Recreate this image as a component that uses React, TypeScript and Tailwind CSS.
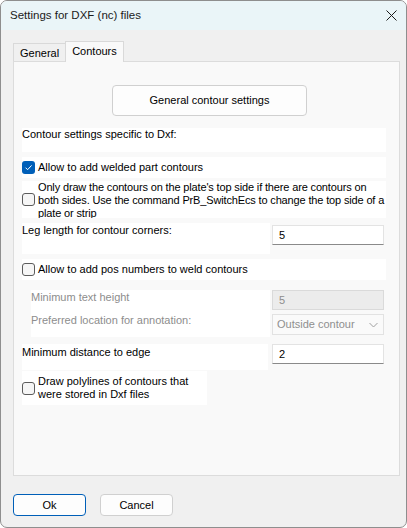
import React from 'react';

const Check = ({ checked }: { checked?: boolean }) =>
  checked ? (
    <span className="w-[13px] h-[13px] rounded-[3px] bg-[#005fb8] flex items-center justify-center shrink-0">
      <svg width="9" height="9" viewBox="0 0 9 9">
        <path d="M1.6 4.7 L3.6 6.7 L7.6 2.4" fill="none" stroke="white" strokeWidth="1" />
      </svg>
    </span>
  ) : (
    <span className="w-[13px] h-[13px] rounded-[3px] border border-[#5c5c5c] bg-[#f6f6f6] shrink-0" />
  );

const TextBox = ({ value, disabled }: { value: string; disabled?: boolean }) => (
  <div
    className={
      disabled
        ? 'w-[112px] h-[20px] border border-[#dadada] bg-[#ececec] text-[#8d8d8d] pl-[6px] flex items-center'
        : 'w-[112px] h-[20px] border border-[#e3e3e3] border-b-[#8a8a8a] bg-white pl-[6px] flex items-center'
    }
  >
    {value}
  </div>
);

export default function App() {
  return (
    <div className="w-[407px] h-[528px] flex flex-col bg-[#f0f0f0] border border-[#8e8e8e] rounded-[7px] overflow-hidden font-['Liberation_Sans',Arial,sans-serif] text-[11px] leading-[13px] text-black">
      {/* title bar */}
      <div className="h-[29px] shrink-0 bg-[#eaf5f8] flex items-center pl-[9px] pr-[9px]">
        <span className="text-[11.5px] text-[#1b1b1b]">Settings for DXF (nc) files</span>
        <svg className="ml-auto" width="11" height="11" viewBox="0 0 11 11">
          <path d="M0.5 0.5 L10.5 10.5 M10.5 0.5 L0.5 10.5" stroke="#1b1b1b" strokeWidth="1" />
        </svg>
      </div>

      <div className="flex-1 flex flex-col pl-[12px] pr-[6px] pt-[12px]">
        {/* tabs */}
        <div className="flex items-end h-[20px]">
          <div className="h-[19px] px-[6px] border border-[#d9d9d9] border-r-0 bg-[#f0f0f0] flex items-center pt-[2px]">
            General
          </div>
          <div className="relative z-10 h-[21px] px-[6px] border border-b-0 border-[#d9d9d9] bg-[#f9f9f9] flex items-start pt-[3px]">
            Contours
          </div>
        </div>

        {/* tab page */}
        <div className="-mt-[1px] h-[415px] border border-[#dcdcdc] bg-[#f9f9f9] pl-[8px] pr-[13px] pt-[23px] flex flex-col">
          <button className="ml-[90px] w-[195px] h-[31px] rounded-[4px] border border-[#d0d0d0] bg-[#fdfdfd] text-[11px]">
            General contour settings
          </button>

          <div className="mt-[12px] h-[24px] bg-white">Contour settings specific to Dxf:</div>

          <label className="mt-[5px] h-[21px] bg-white flex items-center gap-[3px]">
            <Check checked />
            <span>Allow to add welded part contours</span>
          </label>

          <label className="mt-[3px] h-[37px] bg-white flex items-center gap-[3px] overflow-hidden">
            <Check />
            <span className="self-start whitespace-nowrap tracking-[-0.15px]">
              Only draw the contours on the plate's top side if there are contours on
              <br />
              both sides. Use the command PrB_SwitchEcs to change the top side of a
              <br />
              plate or strip
            </span>
          </label>

          <div className="mt-[5px] h-[31px] flex">
            <div className="w-[248px] bg-white pt-[1px]">Leg length for contour corners:</div>
            <div className="ml-[2px] mt-[2px]">
              <TextBox value="5" />
            </div>
          </div>

          <label className="mt-[5px] h-[21px] bg-white flex items-center gap-[3px]">
            <Check />
            <span>Allow to add pos numbers to weld contours</span>
          </label>

          {/* options that depend on the pos numbers checkbox */}
          <div className="mt-[10px] h-[47px] flex text-[#8d8d8d]">
            <div className="ml-[9px] w-[239px] bg-white flex flex-col">
              <div className="pt-[1px]">Minimum text height</div>
              <div className="mt-[10px]">Preferred location for annotation:</div>
            </div>
            <div className="ml-[2px] flex flex-col gap-[4px]">
              <TextBox value="5" disabled />
              <div className="w-[112px] h-[21px] border border-[#e2e2e2] bg-[#fafafa] pl-[4px] pr-[5px] flex items-center">
                <span className="text-[#8f8f8f]">Outside contour</span>
                <svg className="ml-auto" width="9" height="6" viewBox="0 0 9 6">
                  <path d="M0.5 1 L4.5 5 L8.5 1" fill="none" stroke="#a0a0a0" strokeWidth="1" />
                </svg>
              </div>
            </div>
          </div>

          <div className="mt-[7px] h-[26px] flex">
            <div className="w-[246px] bg-white pt-[2px]">Minimum distance to edge</div>
            <div className="ml-[4px]">
              <TextBox value="2" />
            </div>
          </div>

          <label className="mt-[1px] w-[185px] h-[34px] bg-white flex items-center gap-[3px]">
            <Check />
            <span>
              Draw polylines of contours that
              <br />
              were stored in Dxf files
            </span>
          </label>
        </div>

        {/* dialog buttons */}
        <div className="mt-[18px] flex gap-[14px]">
          <button className="w-[73px] h-[22px] rounded-[4px] border border-[#005fb8] bg-[#fdfdfd] text-[11px]">Ok</button>
          <button className="w-[73px] h-[22px] rounded-[4px] border border-[#d0d0d0] bg-[#fdfdfd] text-[11px]">Cancel</button>
        </div>
      </div>
    </div>
  );
}
